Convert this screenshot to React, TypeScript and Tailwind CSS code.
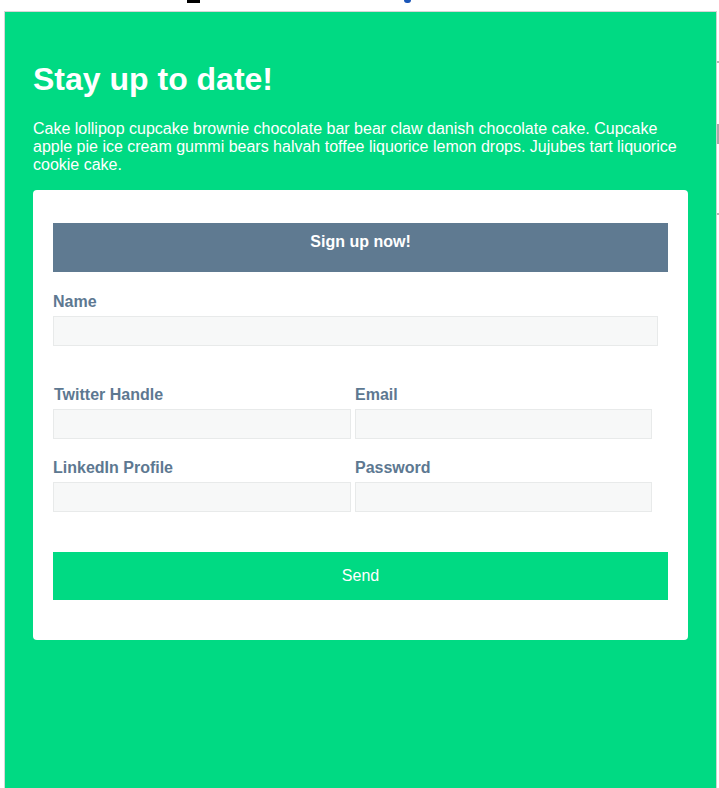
export default function App() {
  const font = { fontFamily: '"Liberation Sans", Arial, sans-serif' };
  return (
    <div className="w-[719px] h-[788px] bg-white overflow-hidden" style={font}>
      {/* top strip with cut-off glyphs */}
      <div className="h-[11px] relative">
        <div className="absolute left-[187px] top-0 w-[13px] h-[3px] bg-black" />
        <div className="absolute left-[404px] top-[-3px] w-[7px] h-[6px] rounded-full bg-[#1a56b8]" />
      </div>
      <div className="flex h-[777px]">
        <div className="w-[4px] bg-white" />
        <div className="w-[712px] bg-[#00da83] border-t border-l border-[#d6d6d6] px-[28px] pt-[49px] text-white">
          <h1 className="text-[32px] leading-[36px] font-bold">Stay up to date!</h1>
          <p className="mt-[23px] text-[16px] leading-[18px]">
            Cake lollipop cupcake brownie chocolate bar bear claw danish chocolate cake. Cupcake apple pie ice cream gummi bears halvah toffee liquorice lemon drops. Jujubes tart liquorice cookie cake.
          </p>
          <div className="mt-[16px] w-[655px] bg-white rounded-[4px] pt-[33px] px-[20px] pb-[40px]">
            <div className="h-[49px] pt-[10px] bg-[#5f7a91] text-center text-[16px] leading-[18px] font-bold text-white">
              Sign up now!
            </div>
            <label className="block mt-[21px] mb-[5px] text-[16px] leading-[18px] font-bold text-[#5d7891]">Name</label>
            <div className="w-[605px] h-[30px] bg-[#f7f8f8] border border-[#e8eaea]" />
            <div className="mt-[40px] flex gap-[4px]">
              <div className="w-[298px]">
                <label className="block pl-[1px] mb-[5px] text-[16px] leading-[18px] font-bold text-[#5d7891]">Twitter Handle</label>
                <div className="h-[30px] bg-[#f7f8f8] border border-[#e8eaea]" />
              </div>
              <div className="w-[297px]">
                <label className="block mb-[5px] text-[16px] leading-[18px] font-bold text-[#5d7891]">Email</label>
                <div className="h-[30px] bg-[#f7f8f8] border border-[#e8eaea]" />
              </div>
            </div>
            <div className="mt-[20px] flex gap-[4px]">
              <div className="w-[298px]">
                <label className="block mb-[5px] text-[16px] leading-[18px] font-bold text-[#5d7891]">LinkedIn Profile</label>
                <div className="h-[30px] bg-[#f7f8f8] border border-[#e8eaea]" />
              </div>
              <div className="w-[297px]">
                <label className="block mb-[5px] text-[16px] leading-[18px] font-bold text-[#5d7891]">Password</label>
                <div className="h-[30px] bg-[#f7f8f8] border border-[#e8eaea]" />
              </div>
            </div>
            <button className="mt-[40px] w-full h-[48px] bg-[#00da83] text-white text-[16px] leading-[18px]">Send</button>
          </div>
        </div>
        <div className="w-[3px] bg-white border-l border-[#cfcfcf] relative">
          <div className="absolute left-0 top-[50px] w-[2px] h-[2px] bg-[#b5b5b5]" />
          <div className="absolute left-0 top-[113px] w-[2px] h-[20px] bg-[#a8a8a8]" />
          <div className="absolute left-0 top-[202px] w-[2px] h-[2px] bg-[#b5b5b5]" />
        </div>
      </div>
    </div>
  );
}
